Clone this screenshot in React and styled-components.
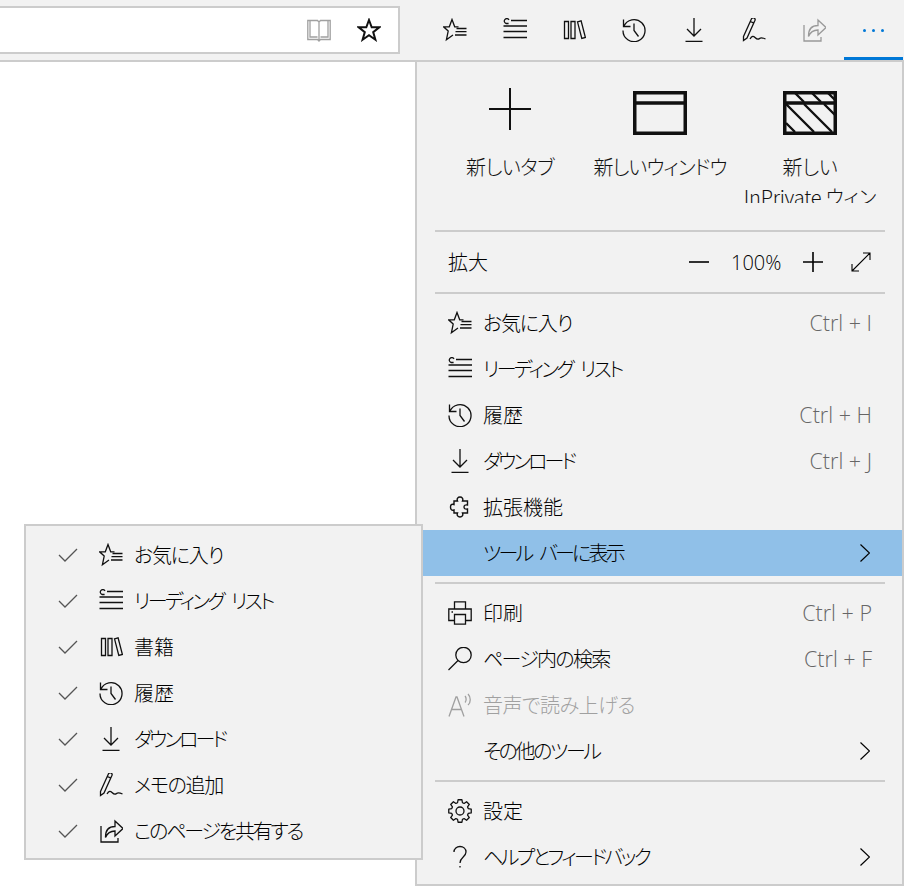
import React from "react";
import styled, { createGlobalStyle } from "styled-components";

const GlobalStyle = createGlobalStyle`
    html, body {
        margin: 0;
        padding: 0;
        background: #fff;
    }
    body {
        width: 904px;
        height: 888px;
        overflow: hidden;
        font-family: "Noto Sans CJK JP", "Open Sans", sans-serif;
        font-size: 20px;
        font-weight: 300;
        font-feature-settings: "palt";
        color: #000;
    }
`;

const Page = styled.div`
    position: relative;
    width: 904px;
    height: 888px;
    overflow: hidden;
`;

const TopBar = styled.div`
    height: 60px;
    display: flex;
    background: #f2f2f2;
    border-bottom: 2px solid #ccc;
`;

const AddressBox = styled.div`
    width: 400px;
    height: 48px;
    margin-top: 6px;
    padding-right: 17px;
    box-sizing: border-box;
    display: flex;
    justify-content: flex-end;
    align-items: center;
    gap: 26px;
    background: #fff;
    border: 2px solid #ccc;
    border-left: 0;
`;

const Toolbar = styled.div`
    display: flex;
    margin-left: 25px;
`;

const ToolButton = styled.div`
    width: 59.8px;
    height: 60px;
    box-sizing: border-box;
    display: flex;
    justify-content: center;
    align-items: center;
    border-bottom: 3px solid ${props => (props.$active ? "#0078d7" : "transparent")};
    padding-top: 3px;
    color: ${props => (props.$muted ? "#999" : "#111")};
`;

const Dots = styled.span`
    display: flex;
    gap: 6px;
    i {
        width: 3px;
        height: 3px;
        border-radius: 50%;
        background: #0078d7;
    }
`;

const Menu = styled.div`
    position: absolute;
    top: 60px;
    right: 0;
    width: 489px;
    height: 826px;
    box-sizing: border-box;
    background: #f2f2f2;
    border: 2px solid #ccc;
`;

const Tiles = styled.div`
    height: 168px;
    padding: 24px 18px 0;
    box-sizing: border-box;
    display: grid;
    grid-template-columns: repeat(3, 150px);
`;

const Tile = styled.div`
    display: flex;
    flex-direction: column;
    align-items: center;
    color: #111;
`;

const TileLabel = styled.div`
    margin-top: 16px;
    height: 51px;
    overflow: hidden;
    line-height: 30px;
    text-align: center;
    width: 140px;
    letter-spacing: ${props => props.$tight || 0}px;
`;

const Separator = styled.div`
    height: 2px;
    margin: 0 17px 0 18px;
    background: #ccc;
`;

const ZoomRow = styled.div`
    height: 60px;
    padding: 0 31px;
    display: flex;
    align-items: center;
`;

const ZoomLabel = styled.span`
    flex: 1;
    padding-bottom: 2px;
`;

const ZoomValue = styled.span`
    width: 50px;
    margin: 0 22px;
    text-align: center;
    font-family: "Open Sans", sans-serif;
    white-space: nowrap;
`;

const ZoomGap = styled.span`
    width: 28px;
`;

const Group = styled.div`
    padding: 6px 0;
`;

const Row = styled.div`
    height: 46px;
    padding-left: ${props => props.$indent || 31}px;
    padding-right: 30px;
    display: flex;
    align-items: center;
    gap: 11px;
    background: ${props => (props.$active ? "#90c0e8" : "transparent")};
    color: ${props => (props.$disabled ? "#a0a0a0" : "#000")};
`;

const IconSlot = styled.span`
    width: 24px;
    height: 24px;
    flex: none;
    display: flex;
    color: ${props => (props.$disabled ? "#a0a0a0" : "#111")};
`;

const RowText = styled.span`
    flex: 1;
    white-space: nowrap;
    padding-bottom: 2px;
    letter-spacing: ${props => props.$tight || 0}px;
    word-spacing: 6px;
`;

const Shortcut = styled.span`
    font-family: "Open Sans", sans-serif;
    font-size: 21.5px;
    color: #666;
    padding-bottom: 2px;
`;

const MoreSlot = styled.span`
    display: flex;
    margin-right: 2px;
`;

const SubMenu = styled.div`
    position: absolute;
    left: 24px;
    top: 524px;
    width: 399px;
    height: 336px;
    box-sizing: border-box;
    padding-top: 6px;
    background: #f2f2f2;
    border: 2px solid #ccc;
`;

const CheckSlot = styled.span`
    width: 20px;
    height: 16px;
    margin-right: 10px;
    flex: none;
    display: flex;
    color: #555;
`;

const Svg = ({ size = 24, box = 24, width, height, children, sw = 1.3 }) => (
    <svg
        width={width || size}
        height={height || size}
        viewBox={`0 0 ${width || box} ${height || box}`}
        fill="none"
        stroke="currentColor"
        strokeWidth={sw}
    >
        {children}
    </svg>
);

// eight toothed gear outline, worked out once when the file loads
const gearPath = (() => {
    const pts = [];
    for (let i = 0; i < 8; i++) {
        const a = (i * Math.PI) / 4;
        [[-0.29, 8.6], [-0.17, 11.4], [0.17, 11.4], [0.29, 8.6]].forEach(([da, r]) => {
            pts.push(`${(12 + r * Math.sin(a + da)).toFixed(2)} ${(12 - r * Math.cos(a + da)).toFixed(2)}`);
        });
    }
    return `M${pts.join("L")}Z`;
})();

const icons = {
    favorites: (
        <Svg>
            <path d="M15.500 8.800h-3.800L9 1.500 6.300 8.800H.6l4.600 4.300L3.400 21.800l6.600-4.800" />
            <path d="M13.500 10.500H23.500M12.500 13.700H23.500M12 17H23.500" />
        </Svg>
    ),
    reading: (
        <Svg>
            <path d="M8 2.500H25M5.600 5.500H3.200a2.500 2.500 0 1 1 2.800-3.600M.5 8H25M.5 13.500H25M.5 19.500H25" />
        </Svg>
    ),
    books: (
        <Svg>
            <path d="M2.500 3.500h4v17h-4zM9 3.500h4v17H9zM15.500 3.800l3.600-1 4.300 16.700-3.600 1z" />
        </Svg>
    ),
    history: (
        <Svg>
            <path d="M1.500 1.500v7h7" />
            <path d="M1.800 8.500a11 11 0 1 1-.8 4" />
            <path d="M12 5.500v7l4.500 6" />
        </Svg>
    ),
    download: (
        <Svg>
            <path d="M12 0V18M5 11l7 7 7-7M3.500 23.500h17" />
        </Svg>
    ),
    note: (
        <Svg>
            <path d="M1.500 18.500 9.500.8c1-2 4.300-.7 3.500 1.500L5 20l-3.500 2.500zM8.300 3.500l3.700 1.600" />
            <path d="M8 21c2-3.500 3.500-3 5-1.500s3 2.500 4.500 1 3-1 6 .5" />
        </Svg>
    ),
    share: (
        <Svg>
            <path d="M2 7v16h17v-4" />
            <path d="M6.500 18c0-7 3.500-10.500 9.500-10.500V2l8 7.500-8 7.500v-5c-4 0-7.500 1.500-9.500 6.500z" />
        </Svg>
    ),
    extension: (
        <Svg sw={1.4}>
            <path d="M9.500 6C8.500 3.500 10 2 12 2s3.500 1.500 2.500 4h5v4c-2.500-.5-3.500.5-3.500 2s1 2.500 3.500 2v4h-5c1 2.500-.5 4-2.500 4s-3.500-1.500-2.500-4H6v-3c-2.500 1-3.500-1-3.500-3s1-3.500 3.500-2.500V6z" />
        </Svg>
    ),
    print: (
        <Svg>
            <path d="M6.500 8V.8h11V8" />
            <path d="M6.500 19.500H.8V8h22.400v11.500h-5.700" />
            <path d="M6.500 13.500h11v9.700h-11z" />
            <path d="M3.500 11h1.500" />
        </Svg>
    ),
    search: (
        <Svg>
            <circle cx="15.500" cy="8" r="7.700" />
            <path d="M10 13.500 .5 23" />
        </Svg>
    ),
    aloud: (
        <Svg>
            <path d="M1 23.500 8 4h1l7 19.500M3.500 16.500h10" />
            <path d="M17 3c1.500 1.500 1.500 5 0 6.500M20 1c3 3 3 8.500 0 11" />
        </Svg>
    ),
    settings: (
        <Svg>
            <path d={gearPath} strokeLinejoin="round" />
            <circle cx="12" cy="12" r="4" />
        </Svg>
    ),
    help: (
        <Svg>
            <path d="M6 7c0-3.500 2.800-5.500 6-5.500s6 2 6 5.500c0 5-6 5-6 11" />
            <path d="M12 21v1.500" />
        </Svg>
    ),
};

const Chevron = () => (
    <MoreSlot>
        <Svg width={10} height={18} sw={1.2}>
            <path d="M.5.5l9 8.500-9 8.500" />
        </Svg>
    </MoreSlot>
);

const menuTop = [
    { icon: "favorites", label: "お気に入り", keys: "Ctrl + I", tight: -1.2 },
    { icon: "reading", label: "リーディング リスト", tight: -2.6 },
    { icon: "history", label: "履歴", keys: "Ctrl + H" },
    { icon: "download", label: "ダウンロード", keys: "Ctrl + J", tight: -3 },
    { icon: "extension", label: "拡張機能" },
    { label: "ツール バーに表示", active: true, more: true, tight: -2.8 },
];

const menuMiddle = [
    { icon: "print", label: "印刷", keys: "Ctrl + P" },
    { icon: "search", label: "ページ内の検索", keys: "Ctrl + F", tight: -1.7 },
    { icon: "aloud", label: "音声で読み上げる", disabled: true, tight: -0.5 },
    { label: "その他のツール", more: true, tight: -2.4 },
];

const menuBottom = [
    { icon: "settings", label: "設定" },
    { icon: "help", label: "ヘルプとフィードバック", more: true, tight: -2.6 },
];

const toolbarItems = [
    { label: "お気に入り", icon: "favorites", tight: -1.2 },
    { label: "リーディング リスト", icon: "reading", tight: -2.6 },
    { label: "書籍", icon: "books" },
    { label: "履歴", icon: "history" },
    { label: "ダウンロード", icon: "download", tight: -3 },
    { label: "メモの追加", icon: "note", tight: -1.4 },
    { label: "このページを共有する", icon: "share", tight: -2.2 },
];

function MenuRows({ items }) {
    return items.map(item => (
        <Row key={item.label} $active={item.active} $disabled={item.disabled}>
            <IconSlot $disabled={item.disabled}>{item.icon && icons[item.icon]}</IconSlot>
            <RowText $tight={item.tight}>{item.label}</RowText>
            {item.keys && <Shortcut>{item.keys}</Shortcut>}
            {item.more && <Chevron />}
        </Row>
    ));
}

export default function App() {
    return (
        <Page>
            <GlobalStyle />
            <TopBar>
                <AddressBox>
                    <IconSlot $disabled>
                        <Svg sw={1.3}>
                            <path d="M.8 2.500h9.700L12 4l1.500-1.500h9.700v19h-9.700L12 23l-1.500-1.500H.8zM12 4v18" />
                            <path d="M3 2.500v16.500h7.500M21 2.500v16.500h-7.500" />
                        </Svg>
                    </IconSlot>
                    <IconSlot>
                        <Svg sw={2}>
                            <path d="M12 2l2.700 7.300h7.600l-6.100 4.800 2.200 7.600L12 17.300l-6.400 4.400 2.200-7.600-6.100-4.800h7.600z" />
                        </Svg>
                    </IconSlot>
                </AddressBox>
                <Toolbar>
                    {toolbarItems.map(item => (
                        <ToolButton key={item.icon} $muted={item.icon === "share"}>
                            {icons[item.icon]}
                        </ToolButton>
                    ))}
                    <ToolButton $active>
                        <Dots>
                            <i />
                            <i />
                            <i />
                        </Dots>
                    </ToolButton>
                </Toolbar>
            </TopBar>

            <Menu>
                <Tiles>
                    <Tile>
                        <Svg width={54} height={50} sw={2}>
                            <path d="M27 2v42M6 23h42" />
                        </Svg>
                        <TileLabel $tight={-0.6}>新しいタブ</TileLabel>
                    </Tile>
                    <Tile>
                        <Svg width={54} height={50} sw={3.5}>
                            <path d="M1.750 6.750h50.500v40.500H1.750zM1.750 17h50.500" />
                        </Svg>
                        <TileLabel $tight={-1}>新しいウィンドウ</TileLabel>
                    </Tile>
                    <Tile>
                        <Svg width={54} height={50} sw={3.5}>
                            <path d="M1.750 6.750h50.500v40.500H1.750zM1.750 17h50.500" />
                            <g strokeWidth={2.4}>
                                <path d="M12 7l9 9M29 7l9 9M45 7l7 7M3 37l9 9M3 18l28 28M21 18l28 28M41 18l11 11" />
                            </g>
                        </Svg>
                        <TileLabel $tight={-0.2}>
                            新しい
                            <br />
                            InPrivate ウィンドウ
                        </TileLabel>
                    </Tile>
                </Tiles>
                <Separator />
                <ZoomRow>
                    <ZoomLabel>拡大</ZoomLabel>
                    <Svg width={20} height={20} sw={1.6}>
                        <path d="M0 10h20" />
                    </Svg>
                    <ZoomValue>100%</ZoomValue>
                    <Svg width={20} height={20} sw={1.6}>
                        <path d="M0 10h20M10 0v20" />
                    </Svg>
                    <ZoomGap />
                    <Svg width={20} height={20} sw={1.1}>
                        <path d="M1 19 19 1M12 1h7v7M1 12v7h7" />
                    </Svg>
                </ZoomRow>
                <Separator />
                <Group>
                    <MenuRows items={menuTop} />
                </Group>
                <Separator />
                <Group>
                    <MenuRows items={menuMiddle} />
                </Group>
                <Separator />
                <Group>
                    <MenuRows items={menuBottom} />
                </Group>
            </Menu>

            <SubMenu>
                {toolbarItems.map(item => (
                    <Row key={item.icon} $indent={32}>
                        <CheckSlot>
                            <Svg width={20} height={16} sw={1.3}>
                                <path d="M1 8l6 6L19 2" />
                            </Svg>
                        </CheckSlot>
                        <IconSlot>{icons[item.icon]}</IconSlot>
                        <RowText $tight={item.tight}>{item.label}</RowText>
                    </Row>
                ))}
            </SubMenu>
        </Page>
    );
}
